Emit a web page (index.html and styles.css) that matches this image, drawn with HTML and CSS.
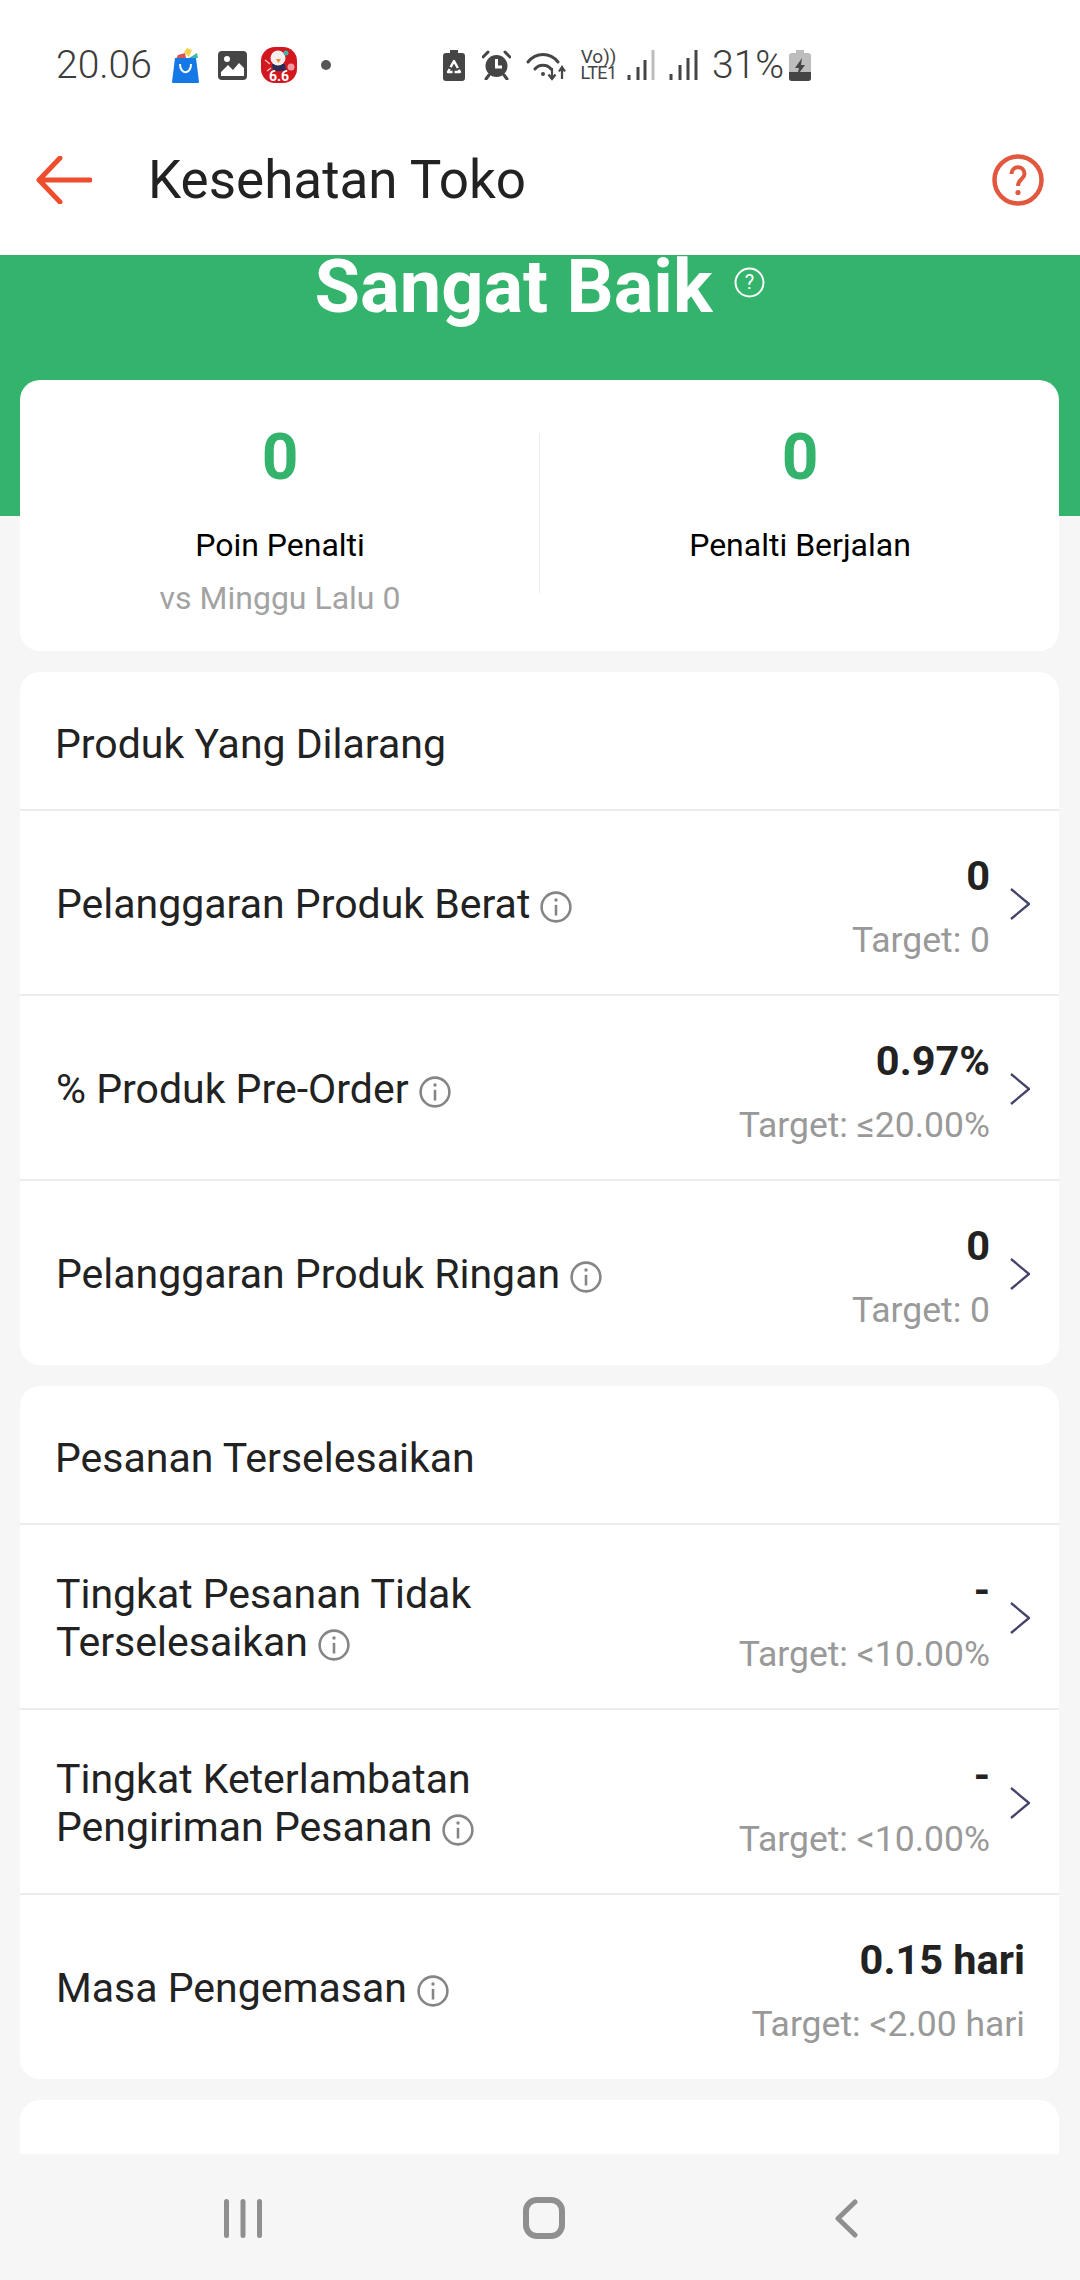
FILE: index.html
```html
<!DOCTYPE html>
<html lang="id">
<head>
<meta charset="utf-8">
<title>Kesehatan Toko</title>
<link rel="stylesheet" href="styles.css">
</head>
<body>
<div class="screen">
  <header class="top">
    <div class="status">
      <span class="clock">20.06</span>
      <svg class="si bag" viewBox="0 0 27 35"><path d="M4 11 L6 7 L13 5 L14 10Z" fill="#d9534f"/><path d="M12 4 L15 0 L20 2 L17 9Z" fill="#f2d14b"/><path d="M17 10 L25 5 L26 10Z" fill="#3bb8a8"/><path d="M3 10H24L27 34Q27 35 26 35H1Q0 35 0 34Z" fill="#1478e6"/><path d="M8 16C8 27 19 27 19 16" fill="none" stroke="#fff" stroke-width="2"/></svg>
      <svg class="si pic" viewBox="0 0 29 29"><rect width="29" height="29" rx="4" fill="#454545"/><path d="M3 25V21L10 14L15 19L21 12L26 17V25Z" fill="#fff"/><circle cx="9" cy="8" r="3" fill="#fff"/></svg>
      <svg class="si promo" viewBox="0 0 36 36"><rect width="36" height="36" rx="14" fill="#d3171f"/><path d="M11 17H24L25 24H12Z" fill="#2b2b55"/><circle cx="17" cy="11" r="7.500" fill="#f5efef"/><path d="M15 12H20L17.500 16Z" fill="#f08a24"/><circle cx="25" cy="6" r="2.500" fill="#3bb8a8"/><circle cx="30" cy="20" r="3.500" fill="#ee9aa0"/><path d="M4 13L9 17M6 24L10 21" stroke="#f7c7c7" stroke-width="1.200"/><text class="promo-text" x="18" y="34">6.6</text></svg>
      <span class="dot"></span>
      <span class="status-space"></span>
      <svg class="si batt" viewBox="0 0 22 31"><path d="M7 0H15V3H19Q22 3 22 6V28Q22 31 19 31H3Q0 31 0 28V6Q0 3 3 3H7Z" fill="#454545"/><path d="M11 11L17 22H5Z" fill="none" stroke="#fff" stroke-width="2.400" stroke-dasharray="8 2" stroke-linejoin="round"/></svg>
      <svg class="si alarm" viewBox="0 0 29 30"><path d="M1 7L6 2M28 7L23 2M7 25L4 29M22 25L25 29" stroke="#454545" stroke-width="3" stroke-linecap="round"/><circle cx="14.500" cy="16" r="11" fill="#454545"/><path d="M14.500 9V17H20" fill="none" stroke="#fff" stroke-width="3"/></svg>
      <svg class="si wifi" viewBox="0 0 40 31"><path d="M2 12C10 2 24 2 32 12M9 19C13 14 21 14 25 19" fill="none" stroke="#454545" stroke-width="3" stroke-linecap="round"/><circle cx="17" cy="24" r="2" fill="#454545"/><path d="M26 18V28M22.500 24.500L26 29 29.500 24.500M36 29V18M33 21.500L36 17 39 21.500" fill="none" stroke="#454545" stroke-width="2.200"/></svg>
      <span class="volte"><span>Vo))</span><span class="lte">LTE1</span></span>
      <svg class="si sig1" viewBox="0 0 28 30"><path d="M2 25V30M11 17V30" stroke="#454545" stroke-width="3"/><path d="M18 10V30" stroke="#454545" stroke-width="3"/><path d="M26 0V30" stroke="#bdbdbd" stroke-width="3"/></svg>
      <svg class="si sig2" viewBox="0 0 30 30"><path d="M3 24V30M12 15V30M20 8V30M28 0V30" stroke="#454545" stroke-width="3"/></svg>
      <span class="pct">31%</span>
      <svg class="si charge" viewBox="0 0 22 31"><path d="M7 0H15V3H19Q22 3 22 6V28Q22 31 19 31H3Q0 31 0 28V6Q0 3 3 3H7Z" fill="#bdbdbd"/><path d="M0 22H22V28Q22 31 19 31H3Q0 31 0 28Z" fill="#454545"/><path d="M13 8L6 18H10L8 26 16 15H12Z" fill="#454545"/></svg>
    </div>
    <div class="appbar">
      <svg class="back" viewBox="0 0 56 48"><path d="M3 24H54M24 2L3 24 24 46" fill="none" stroke="#ee4d2d" stroke-width="5" stroke-linecap="round" stroke-linejoin="round"/></svg>
      <h1 class="title">Kesehatan Toko</h1>
      <svg class="help" viewBox="0 0 52 52"><circle cx="26" cy="26" r="23.500" fill="none" stroke="#e2583e" stroke-width="4.500"/><path d="M19.500 20C19.500 11 32.500 11 32.500 20C32.500 25 26 25 26 32" fill="none" stroke="#e2583e" stroke-width="4"/><circle cx="26" cy="38.500" r="2.600" fill="#e2583e"/></svg>
    </div>
  </header>

  <main class="content">
    <section class="hero">
      <span class="grade">Sangat Baik</span>
      <svg class="grade-help" viewBox="0 0 31 31"><circle cx="15.500" cy="15.500" r="14" fill="none" stroke="#fff" stroke-width="2"/><text class="grade-q" x="15.500" y="22">?</text></svg>
    </section>

    <div class="cards">
      <section class="card summary">
        <div class="stat">
          <div class="stat-num">0</div>
          <div class="stat-label">Poin Penalti</div>
          <div class="stat-sub">vs Minggu Lalu 0</div>
        </div>
        <div class="stat-rule"></div>
        <div class="stat">
          <div class="stat-num">0</div>
          <div class="stat-label">Penalti Berjalan</div>
        </div>
      </section>

      <section class="card list">
        <h2 class="card-head">Produk Yang Dilarang</h2>
        <div class="row">
          <div class="label">Pelanggaran Produk Berat<svg class="info" viewBox="0 0 30 30"><use href="#i"/></svg></div>
          <div class="vals"><div class="val">0</div><div class="tgt">Target: 0</div></div>
          <svg class="chev" viewBox="0 0 20 32"><path d="M1 1L19 16 1 31" fill="none" stroke="#45456a" stroke-width="2.300"/></svg>
        </div>
        <div class="row">
          <div class="label">% Produk Pre-Order<svg class="info" viewBox="0 0 30 30"><use href="#i"/></svg></div>
          <div class="vals"><div class="val">0.97%</div><div class="tgt">Target: ≤20.00%</div></div>
          <svg class="chev" viewBox="0 0 20 32"><path d="M1 1L19 16 1 31" fill="none" stroke="#45456a" stroke-width="2.300"/></svg>
        </div>
        <div class="row">
          <div class="label">Pelanggaran Produk Ringan<svg class="info" viewBox="0 0 30 30"><use href="#i"/></svg></div>
          <div class="vals"><div class="val">0</div><div class="tgt">Target: 0</div></div>
          <svg class="chev" viewBox="0 0 20 32"><path d="M1 1L19 16 1 31" fill="none" stroke="#45456a" stroke-width="2.300"/></svg>
        </div>
      </section>

      <section class="card list">
        <h2 class="card-head">Pesanan Terselesaikan</h2>
        <div class="row">
          <div class="label">Tingkat Pesanan Tidak<br>Terselesaikan<svg class="info" viewBox="0 0 30 30"><use href="#i"/></svg></div>
          <div class="vals"><div class="val">-</div><div class="tgt">Target: &lt;10.00%</div></div>
          <svg class="chev" viewBox="0 0 20 32"><path d="M1 1L19 16 1 31" fill="none" stroke="#45456a" stroke-width="2.300"/></svg>
        </div>
        <div class="row">
          <div class="label">Tingkat Keterlambatan<br>Pengiriman Pesanan<svg class="info" viewBox="0 0 30 30"><use href="#i"/></svg></div>
          <div class="vals"><div class="val">-</div><div class="tgt">Target: &lt;10.00%</div></div>
          <svg class="chev" viewBox="0 0 20 32"><path d="M1 1L19 16 1 31" fill="none" stroke="#45456a" stroke-width="2.300"/></svg>
        </div>
        <div class="row row-plain">
          <div class="label">Masa Pengemasan<svg class="info" viewBox="0 0 30 30"><use href="#i"/></svg></div>
          <div class="vals"><div class="val">0.15 hari</div><div class="tgt">Target: &lt;2.00 hari</div></div>
        </div>
      </section>

      <section class="card card-next"></section>
    </div>
  </main>

  <nav class="navbar">
    <svg class="nav-recent" viewBox="0 0 38 39"><path d="M2.500 2.500V36.500M19 2.500V36.500M35.500 2.500V36.500" stroke="#8f8f8f" stroke-width="5" stroke-linecap="round"/></svg>
    <svg class="nav-home" viewBox="0 0 42 42"><rect x="3" y="3" width="36" height="36" rx="11" fill="none" stroke="#8f8f8f" stroke-width="6"/></svg>
    <svg class="nav-back" viewBox="0 0 23 39"><path d="M20 3L3 19.500 20 36" fill="none" stroke="#8f8f8f" stroke-width="5" stroke-linecap="round" stroke-linejoin="round"/></svg>
  </nav>
</div>

<svg class="defs" width="0" height="0">
  <symbol id="i" viewBox="0 0 30 30">
    <circle cx="15" cy="15" r="13.500" fill="none" stroke="#858585" stroke-width="2.400"/>
    <path d="M15 13V23" stroke="#858585" stroke-width="2.400"/>
    <circle cx="15" cy="8.500" r="1.600" fill="#858585"/>
  </symbol>
</svg>
</body>
</html>
```

FILE: styles.css
```css
* { box-sizing: border-box; }
html, body { margin: 0; padding: 0; }
body {
  width: 1080px;
  height: 2280px;
  overflow: hidden;
  background: #f6f6f6;
  font-family: Roboto, "Liberation Sans", sans-serif;
  color: #222;
}
.screen { display: flex; flex-direction: column; height: 2280px; }
.defs { display: block; height: 0; }

/* status + app bar */
.top { height: 255px; flex: none; background: #fff; }
.status {
  height: 130px;
  display: flex;
  align-items: center;
  padding-left: 56px;
}
.clock { font-size: 39px; font-weight: 300; color: #3c3c3c; width: 96px; margin-right: 20px; }
.si { display: block; flex: none; }
.bag { width: 27px; height: 35px; }
.pic { width: 29px; height: 29px; margin-left: 19px; }
.promo { width: 36px; height: 36px; margin-left: 14px; }
.promo-text { font: 700 14px Roboto, sans-serif; fill: #fff; text-anchor: middle; }
.dot { width: 10px; height: 10px; border-radius: 50%; background: #555; margin-left: 24px; }
.status-space { width: 112px; flex: none; }
.batt { width: 22px; height: 31px; }
.alarm { width: 29px; height: 30px; margin-left: 17px; }
.wifi { width: 40px; height: 31px; margin-left: 15px; }
.volte {
  display: flex;
  flex-direction: column;
  align-items: center;
  width: 39px;
  margin-left: 13px;
  font-size: 19px;
  line-height: 16px;
  color: #454545;
  white-space: nowrap;
}
.lte { font-size: 18px; letter-spacing: -0.6px; }
.sig1 { width: 28px; height: 30px; margin-left: 9px; }
.sig2 { width: 30px; height: 30px; margin-left: 13px; }
.pct { font-size: 39px; font-weight: 300; color: #3c3c3c; width: 72px; margin-left: 14px; white-space: nowrap; }
.charge { width: 22px; height: 31px; margin-left: 5px; }

.appbar {
  height: 100px;
  display: flex;
  align-items: center;
  padding: 0 36px;
}
.back { width: 56px; height: 48px; flex: none; }
.title {
  margin: 0 0 0 56px;
  font-size: 53px;
  font-weight: 400;
  line-height: 60px;
  color: #222;
  flex: 1;
}
.help { width: 52px; height: 52px; flex: none; }

/* content */
.content { flex: 1; overflow: hidden; min-height: 0; }
.hero {
  height: 261px;
  background: #33b36b;
  display: flex;
  justify-content: center;
  align-items: flex-start;
  overflow: hidden;
  color: #fff;
}
.grade { font-size: 74px; font-weight: 700; line-height: 60px; margin-top: 2px; }
.grade-help { width: 31px; height: 31px; margin: 12px 0 0 22px; flex: none; }
.grade-q { font: 400 20px Roboto, sans-serif; fill: #fff; text-anchor: middle; }

.cards {
  display: flex;
  flex-direction: column;
  gap: 21px;
  margin-top: -136px;
  padding: 0 21px 0 20px;
}
.card { background: #fff; border-radius: 20px; overflow: hidden; flex: none; }

.summary {
  height: 271px;
  display: grid;
  grid-template-columns: 1fr 1px 1fr;
  padding-top: 53px;
}
.stat { text-align: center; padding: 2px 0 0 1px; }
.stat-num { font-size: 64px; font-weight: 700; line-height: 46px; color: #33b36b; }
.stat-label { font-size: 32px; line-height: 40px; color: #000; margin-top: 44px; }
.stat-sub { font-size: 32px; line-height: 40px; color: #a3a3a3; margin-top: 13px; }
.stat-rule { background: #ececec; height: 160px; }

.list { padding-bottom: 1px; }
.card-head {
  margin: 0;
  height: 137px;
  padding: 48px 36px 0 35px;
  font-size: 41px;
  font-weight: 400;
  line-height: 48px;
  color: #222;
}
.row {
  height: 185px;
  border-top: 2px solid #ececec;
  display: flex;
  align-items: center;
  padding: 0 29px 0 36px;
}
.row-plain { padding-right: 34px; }
.label { flex: 1; font-size: 41px; line-height: 48px; color: #222; padding-top: 3px; }
.info { width: 32px; height: 32px; margin-left: 10px; vertical-align: -5px; }
.vals { text-align: right; flex: none; padding-top: 8px; }
.val { font-size: 41.5px; font-weight: 700; line-height: 48px; color: #222; }
.tgt { font-size: 35.5px; line-height: 44px; color: #999; margin-top: 18px; }
.chev { width: 20px; height: 32px; margin: 2px 0 0 20px; flex: none; }
.card-next { height: 100px; }

/* nav */
.navbar {
  height: 126px;
  flex: none;
  background: #f6f6f6;
  display: grid;
  grid-template-columns: 224px 38px 261px 42px 270px 23px;
  align-items: center;
  padding-top: 2px;
}
.nav-recent { grid-column: 2; width: 38px; height: 39px; }
.nav-home { grid-column: 4; width: 42px; height: 42px; }
.nav-back { grid-column: 6; width: 23px; height: 39px; }
```
